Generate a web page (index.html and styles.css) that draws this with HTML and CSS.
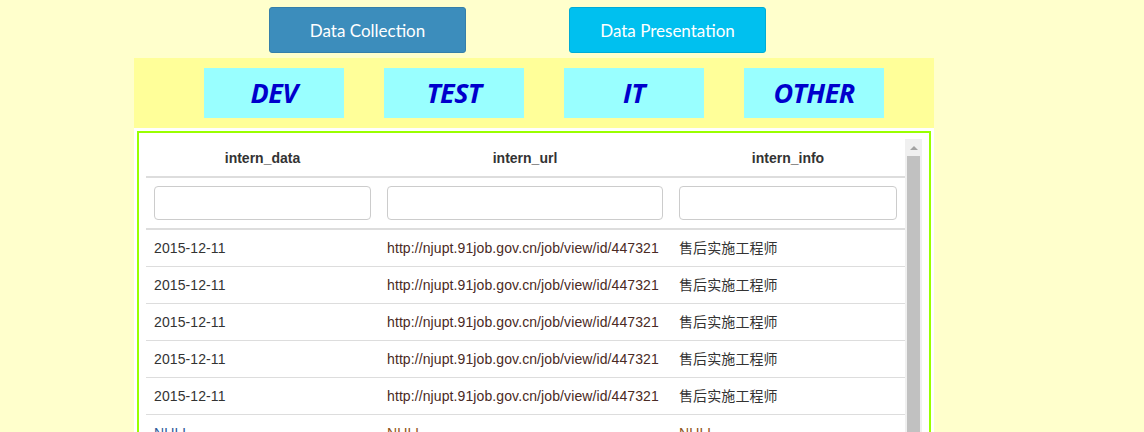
FILE: index.html
```html
<!DOCTYPE html>
<html lang="en">
<head>
<meta charset="utf-8">
<title>Intern data</title>
<link rel="stylesheet" href="styles.css">
</head>
<body>
<div class="page">
  <div class="actions">
    <button class="btn btn-primary">Data Collection</button>
    <button class="btn btn-info">Data Presentation</button>
  </div>
  <div class="band">
    <div class="tab">DEV</div>
    <div class="tab">TEST</div>
    <div class="tab">IT</div>
    <div class="tab">OTHER</div>
  </div>
  <div class="panel">
    <div class="frame">
      <div class="scroller">
        <div class="table-wrap">
          <table class="grid">
            <colgroup>
              <col class="c1"><col class="c2"><col class="c3">
            </colgroup>
            <thead>
              <tr class="head"><th>intern_data</th><th>intern_url</th><th>intern_info</th></tr>
              <tr class="filters">
                <th><input class="filter" type="text"></th>
                <th><input class="filter" type="text"></th>
                <th><input class="filter" type="text"></th>
              </tr>
            </thead>
            <tbody>
              <tr><td>2015-12-11</td><td class="url">http://njupt.91job.gov.cn/job/view/id/447321</td><td class="cjk">售后实施工程师</td></tr>
              <tr><td>2015-12-11</td><td class="url">http://njupt.91job.gov.cn/job/view/id/447321</td><td class="cjk">售后实施工程师</td></tr>
              <tr><td>2015-12-11</td><td class="url">http://njupt.91job.gov.cn/job/view/id/447321</td><td class="cjk">售后实施工程师</td></tr>
              <tr><td>2015-12-11</td><td class="url">http://njupt.91job.gov.cn/job/view/id/447321</td><td class="cjk">售后实施工程师</td></tr>
              <tr><td>2015-12-11</td><td class="url">http://njupt.91job.gov.cn/job/view/id/447321</td><td class="cjk">售后实施工程师</td></tr>
              <tr><td class="null-a">NULL</td><td class="null-b">NULL</td><td class="null-b">NULL</td></tr>
              <tr><td class="null-a">NULL</td><td class="null-b">NULL</td><td class="null-b">NULL</td></tr>
            </tbody>
          </table>
        </div>
        <div class="scrollbar">
          <div class="sb-btn"><span class="sb-arrow"></span></div>
          <div class="sb-thumb"></div>
        </div>
      </div>
    </div>
  </div>
</div>
</body>
</html>
```

FILE: styles.css
```css
html, body {
  margin: 0;
  padding: 0;
}
body {
  background: #ffffcc;
  font-family: "Liberation Sans", Arial, sans-serif;
  font-size: 14px;
  line-height: 20px;
  color: #333;
  overflow: hidden;
}
.page {
  margin-left: 134px;
  width: 800px;
}
.actions {
  display: flex;
  gap: 103px;
  padding: 7px 0 0 135px;
}
.btn {
  width: 197px;
  height: 46px;
  border-radius: 3px;
  color: #fff;
  font-family: Lato, "Open Sans", sans-serif;
  font-size: 17px;
  padding: 0;
  cursor: pointer;
}
.btn-primary {
  background: #3c8dbc;
  border: 1px solid #367fa9;
}
.btn-info {
  background: #00c0ef;
  border: 1px solid #00acd6;
}
.band {
  margin-top: 5px;
  height: 50px;
  padding: 10px 50px 10px 70px;
  background: #ffff99;
  display: flex;
  gap: 40px;
}
.tab {
  width: 140px;
  height: 50px;
  background: #99ffff;
  color: #0000cc;
  font-family: "Open Sans", sans-serif;
  font-weight: bold;
  font-style: italic;
  font-size: 27px;
  display: flex;
  align-items: center;
  justify-content: center;
  letter-spacing: -0.6px;
}
.panel {
  background: #fff;
  padding: 3px;
  height: 320px;
}
.frame {
  border: 2px solid #99ff00;
  padding: 6px 7px 0 7px;
  height: 400px;
}
.scroller {
  display: flex;
  height: 100%;
}
.table-wrap {
  flex: 1;
  overflow: hidden;
}
.grid {
  width: 759px;
  table-layout: fixed;
  border-collapse: collapse;
}
.c1 { width: 233px; }
.c2 { width: 292px; }
.c3 { width: 234px; }
.grid th, .grid td {
  padding: 8px;
  text-align: left;
  white-space: nowrap;
  overflow: hidden;
}
.head th {
  text-align: center;
  font-weight: bold;
  padding-top: 9px;
  border-bottom: 2px solid #ddd;
}
.filters th {
  border-bottom: 2px solid #ddd;
}
.filter {
  display: block;
  box-sizing: border-box;
  width: 100%;
  height: 34px;
  border: 1px solid #ccc;
  border-radius: 4px;
  background: #fff;
  margin: 0;
}
.grid tbody tr + tr td {
  border-top: 1px solid #ddd;
}
.grid tbody td {
  letter-spacing: 0.1px;
}
.url {
  color: #4a2a24;
}
.cjk {
  font-family: "Liberation Sans", "Noto Sans CJK SC", sans-serif;
}
.null-a { color: #2f5b9a; }
.null-b { color: #8f5520; }
.scrollbar {
  width: 17px;
  background: #f0f0f0;
  display: flex;
  flex-direction: column;
  align-items: center;
}
.sb-btn {
  height: 17px;
  width: 17px;
  display: flex;
  align-items: center;
  justify-content: center;
}
.sb-arrow {
  width: 0;
  height: 0;
  border-left: 4px solid transparent;
  border-right: 4px solid transparent;
  border-bottom: 4px solid #a3a3a3;
}
.sb-thumb {
  width: 13px;
  flex: 1;
  background: #c1c1c1;
}
```
